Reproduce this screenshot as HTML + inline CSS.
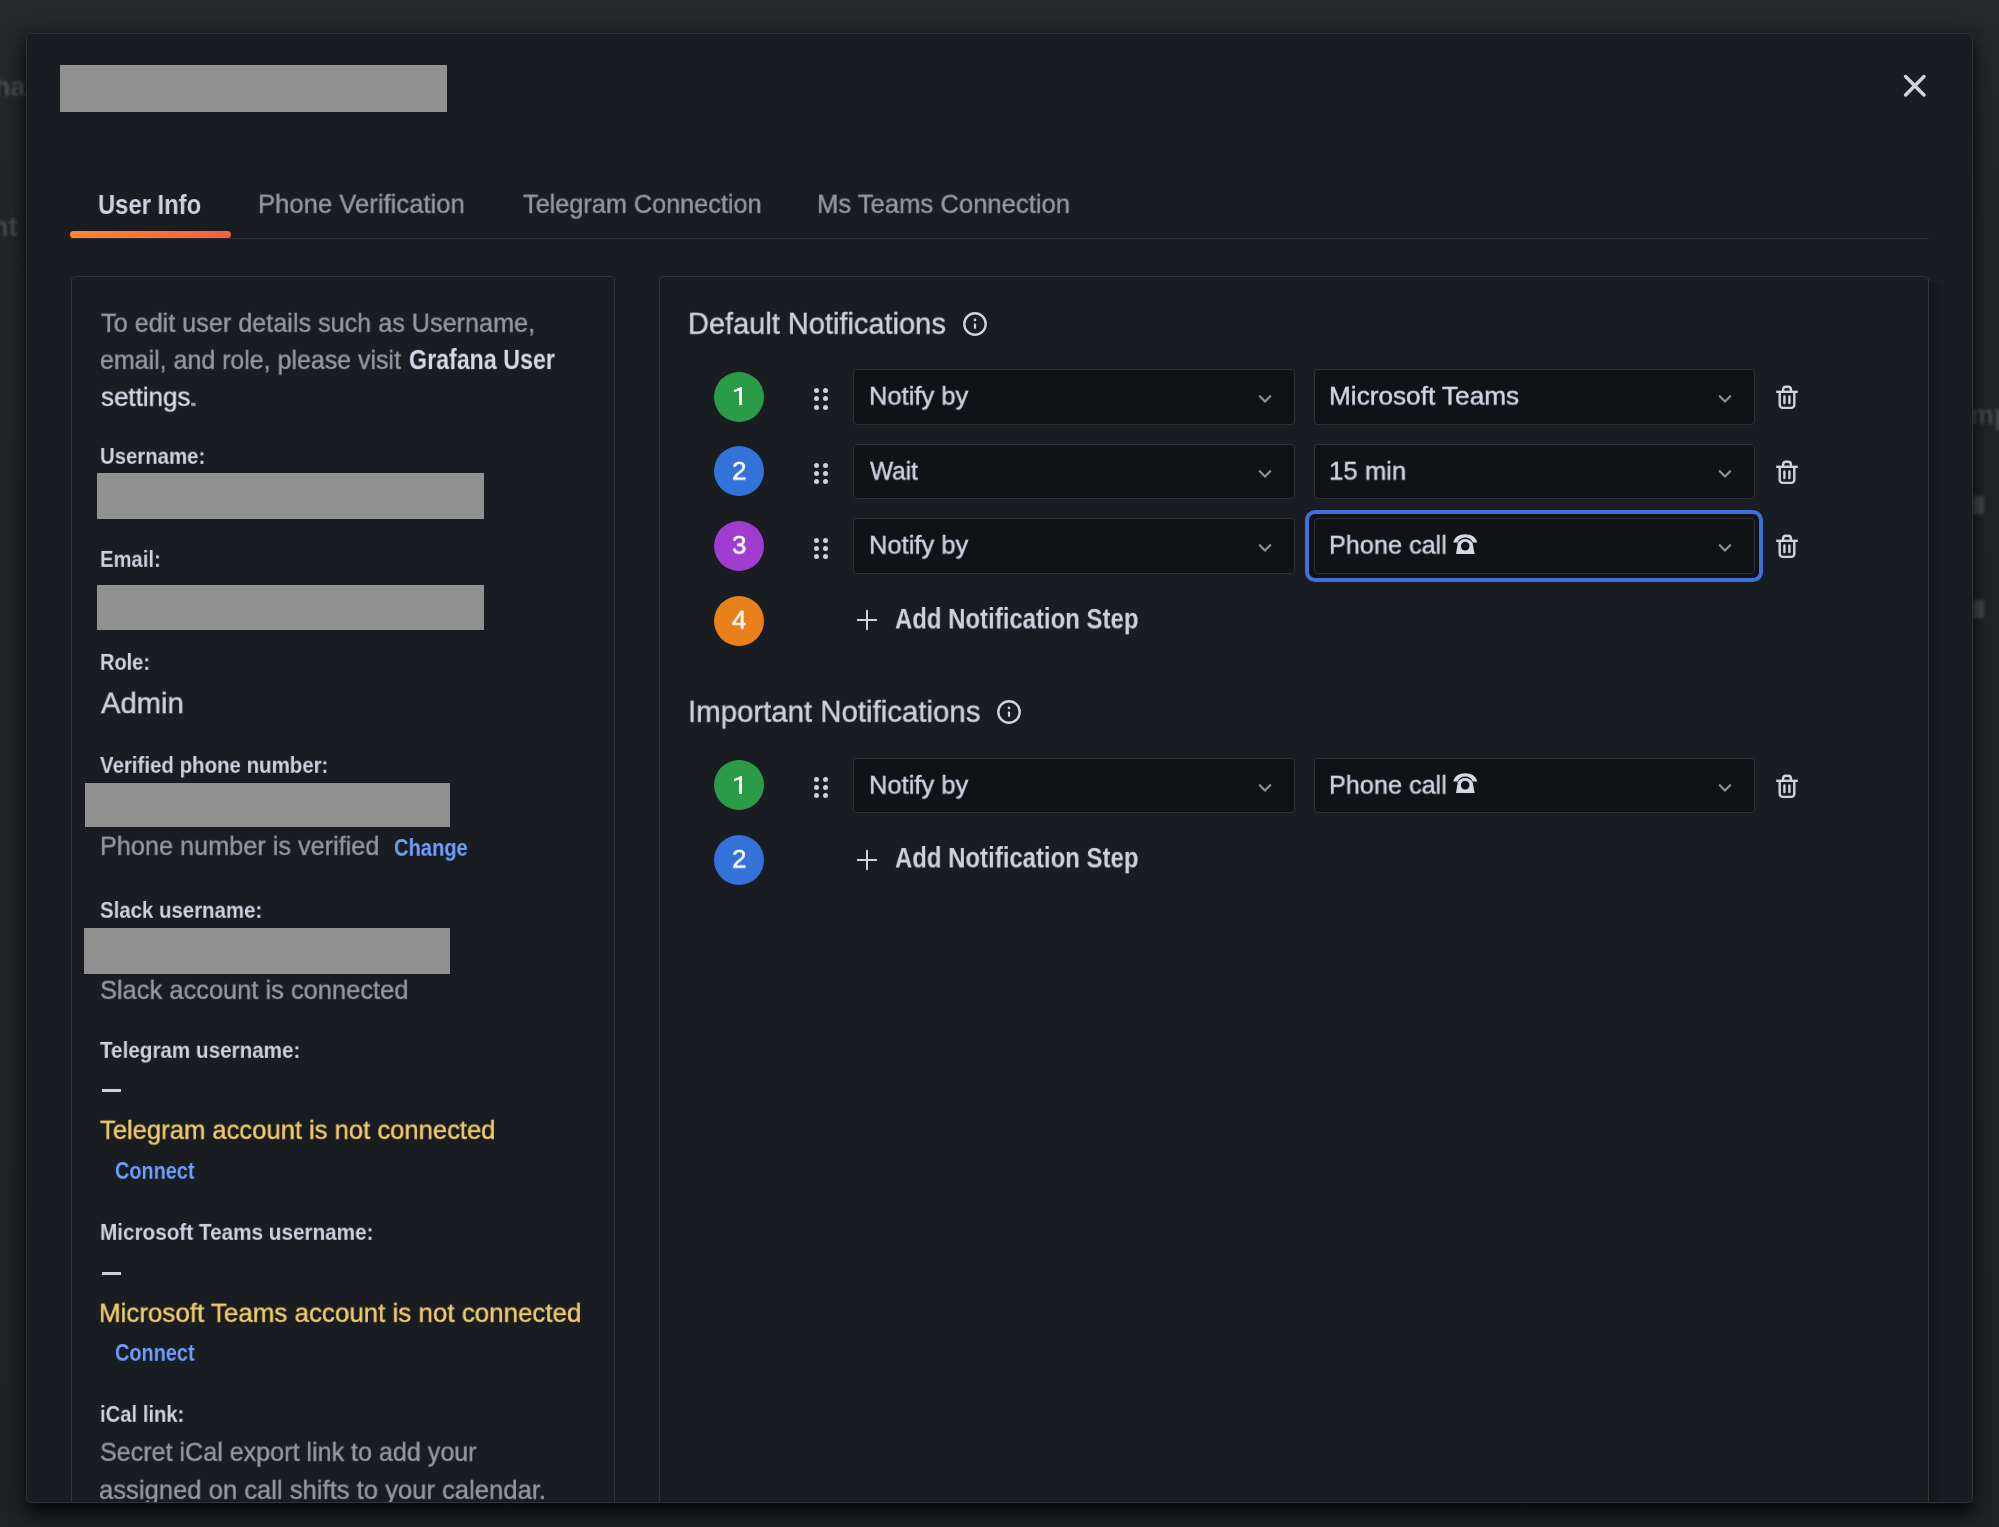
<!DOCTYPE html>
<html><head><meta charset="utf-8"><style>
html,body{margin:0;padding:0;}
body{width:1999px;height:1527px;overflow:hidden;position:relative;background:#222327;font-family:"Liberation Sans",sans-serif;}
.t{position:absolute;white-space:nowrap;transform-origin:0 0;will-change:transform;}
.r{-webkit-text-stroke:0.45px currentColor;}
</style></head><body>
<div style="position:absolute;left:0;top:0;width:1999px;height:1527px;background:linear-gradient(180deg,#26282b 0%,#222428 12%,#1f2125 100%)"></div>
<div style="position:absolute;left:0;top:0;width:1999px;height:1527px;overflow:hidden">
<div style="position:absolute;left:-6px;top:72px;font-family:'Liberation Sans';font-weight:700;font-size:27px;line-height:30px;color:#4a4c50;filter:blur(1px)">ha</div>
<div style="position:absolute;left:-8px;top:212px;font-family:'Liberation Sans';font-weight:700;font-size:27px;line-height:30px;color:#45474b;filter:blur(1px)">nt</div>
<div style="position:absolute;left:1970px;top:400px;font-family:'Liberation Sans';font-weight:700;font-size:27px;line-height:30px;color:#45474b;filter:blur(1px)">mp</div>
<div style="position:absolute;left:1972px;top:496px;width:12px;height:18px;background:#45474b;filter:blur(1.5px);border-radius:2px"></div>
<div style="position:absolute;left:1972px;top:600px;width:12px;height:18px;background:#45474b;filter:blur(1.5px);border-radius:2px"></div>
<div style="position:absolute;left:26px;top:33px;width:1947px;height:1470px;background:#191c20;border-radius:5px;box-shadow:0 0 18px rgba(0,0,0,0.4),0 12px 16px rgba(0,0,0,0.6)"></div>
<div style="position:absolute;left:0;top:0;width:1999px;height:1502px;overflow:hidden">
<div style="position:absolute;left:60px;top:65.3px;width:387.2px;height:46.3px;background:#919191"></div>
<svg style="position:absolute;left:1900px;top:71px" width="30" height="30" viewBox="0 0 30 30"><path d="M5.6 5.6L24 24M24 5.6L5.6 24" stroke="#d3d3e0" stroke-width="3.5" stroke-linecap="round"/></svg>
<div class="t" style="left:97.64px;top:191px;font-size:27.5px;line-height:27.5px;color:#d0d0de;font-weight:700;transform:scale(0.8650,1.0005)">User Info</div>
<div class="t r" style="left:258.28px;top:190px;font-size:28.25px;line-height:28.25px;color:#9797a4;font-weight:400;transform:scale(0.9081,0.9511)">Phone Verification</div>
<div class="t r" style="left:522.87px;top:190px;font-size:28.25px;line-height:28.25px;color:#9797a4;font-weight:400;transform:scale(0.8936,0.9511)">Telegram Connection</div>
<div class="t r" style="left:817.28px;top:190px;font-size:28.25px;line-height:28.25px;color:#9797a4;font-weight:400;transform:scale(0.9070,0.9511)">Ms Teams Connection</div>
<div style="position:absolute;left:70px;top:238px;width:1859px;height:1px;background:#2b2d32"></div>
<div style="position:absolute;left:70px;top:230.5px;width:160.5px;height:7.0px;background:linear-gradient(90deg,#ff8833,#f55f3e);border-radius:4px"></div>
<div style="position:absolute;left:71px;top:276px;width:544px;height:1254px;border:1px solid #32343a;border-radius:4px;box-sizing:border-box;"></div>
<div style="position:absolute;left:659px;top:276px;width:1270px;height:1254px;border:1px solid #32343a;border-radius:4px;box-sizing:border-box;"></div>
<div style="position:absolute;left:1929px;top:282px;width:14px;height:1248px;background:linear-gradient(90deg,rgba(0,0,0,0.3),rgba(0,0,0,0))"></div>
<div class="t r" style="left:100.87px;top:309px;font-size:28.25px;line-height:28.25px;color:#9797a4;font-weight:400;transform:scale(0.8916,0.9511)">To edit user details such as Username,</div>
<div class="t r" style="left:100.00px;top:346px;font-size:28.25px;line-height:28.25px;color:#9797a4;font-weight:400;transform:scale(0.8833,0.9511)">email, and role, please visit</div>
<div class="t" style="left:409.26px;top:345px;font-size:29.5px;line-height:29.5px;color:#d8d8e6;font-weight:700;transform:scale(0.7872,0.9634)">Grafana User</div>
<div class="t r" style="left:100.51px;top:383px;font-size:28.25px;line-height:28.25px;color:#d8d8e6;font-weight:400;transform:scale(0.9184,0.9511)">settings</div>
<div class="t r" style="left:188.30px;top:383px;font-size:28.25px;line-height:28.25px;color:#9797a4;font-weight:400;transform:scale(1.3714,0.9511)">.</div>
<div class="t" style="left:100.47px;top:446px;font-size:23.5px;line-height:23.5px;color:#d0d0de;font-weight:700;transform:scale(0.8662,0.9381)">Username:</div>
<div style="position:absolute;left:97px;top:473px;width:387px;height:46px;background:#919191"></div>
<div class="t" style="left:99.64px;top:549px;font-size:23.5px;line-height:23.5px;color:#d0d0de;font-weight:700;transform:scale(0.8606,0.9381)">Email:</div>
<div style="position:absolute;left:97px;top:585px;width:387px;height:45px;background:#919191"></div>
<div class="t" style="left:100.06px;top:652px;font-size:23.5px;line-height:23.5px;color:#d0d0de;font-weight:700;transform:scale(0.8507,0.9381)">Role:</div>
<div class="t r" style="left:100.95px;top:689px;font-size:31.5px;line-height:31.5px;color:#d0d0de;font-weight:400;transform:scale(0.9270,0.9265)">Admin</div>
<div class="t" style="left:100.35px;top:755px;font-size:23.5px;line-height:23.5px;color:#d0d0de;font-weight:700;transform:scale(0.8702,0.9381)">Verified phone number:</div>
<div style="position:absolute;left:85px;top:783px;width:365px;height:44px;background:#919191"></div>
<div class="t r" style="left:100.32px;top:832px;font-size:28.25px;line-height:28.25px;color:#9797a4;font-weight:400;transform:scale(0.8940,0.9511)">Phone number is verified</div>
<div class="t" style="left:393.84px;top:837px;font-size:23.5px;line-height:23.5px;color:#6e9fff;font-weight:700;transform:scale(0.8558,0.9882)">Change</div>
<div class="t" style="left:99.81px;top:900px;font-size:23.5px;line-height:23.5px;color:#d0d0de;font-weight:700;transform:scale(0.8681,0.9381)">Slack username:</div>
<div style="position:absolute;left:84px;top:928px;width:366px;height:45.5px;background:#919191"></div>
<div class="t r" style="left:100.05px;top:976px;font-size:28.25px;line-height:28.25px;color:#9797a4;font-weight:400;transform:scale(0.9007,0.9511)">Slack account is connected</div>
<div class="t" style="left:99.98px;top:1040px;font-size:23.5px;line-height:23.5px;color:#d0d0de;font-weight:700;transform:scale(0.8782,0.9381)">Telegram username:</div>
<div style="position:absolute;left:101.6px;top:1089px;width:19.5px;height:3.2000000000000455px;background:#d0d0de"></div>
<div class="t r" style="left:100.03px;top:1116px;font-size:28.25px;line-height:28.25px;color:#f2cc6b;font-weight:400;transform:scale(0.9058,0.9511)">Telegram account is not connected</div>
<div class="t" style="left:114.86px;top:1160px;font-size:23.5px;line-height:23.5px;color:#6e9fff;font-weight:700;transform:scale(0.8456,0.9882)">Connect</div>
<div class="t" style="left:99.60px;top:1222px;font-size:23.5px;line-height:23.5px;color:#d0d0de;font-weight:700;transform:scale(0.8811,0.9381)">Microsoft Teams username:</div>
<div style="position:absolute;left:101.8px;top:1271.6px;width:19.10000000000001px;height:3.0px;background:#d0d0de"></div>
<div class="t r" style="left:99.30px;top:1299px;font-size:28.25px;line-height:28.25px;color:#f2cc6b;font-weight:400;transform:scale(0.9180,0.9511)">Microsoft Teams account is not connected</div>
<div class="t" style="left:114.85px;top:1342px;font-size:23.5px;line-height:23.5px;color:#6e9fff;font-weight:700;transform:scale(0.8464,0.9882)">Connect</div>
<div class="t" style="left:99.84px;top:1404px;font-size:23.5px;line-height:23.5px;color:#d0d0de;font-weight:700;transform:scale(0.8610,0.9381)">iCal link:</div>
<div class="t r" style="left:100.32px;top:1438px;font-size:28.25px;line-height:28.25px;color:#9797a4;font-weight:400;transform:scale(0.8882,0.9511)">Secret iCal export link to add your</div>
<div class="t r" style="left:99.37px;top:1476px;font-size:28.25px;line-height:28.25px;color:#9797a4;font-weight:400;transform:scale(0.9065,0.9511)">assigned on call shifts to your calendar.</div>
<div class="t r" style="left:688.25px;top:309px;font-size:31.5px;line-height:31.5px;color:#d0d0de;font-weight:400;transform:scale(0.9203,0.9535)">Default Notifications</div>
<svg style="position:absolute;left:960.6px;top:309.9px" width="28" height="28" viewBox="0 0 28 28"><circle cx="14" cy="14" r="10.7" fill="none" stroke="#d0d0de" stroke-width="2.4"/><rect x="12.9" y="13.6" width="2.2" height="5.2" rx="0.6" fill="#d0d0de"/><circle cx="14" cy="9.9" r="1.35" fill="#d0d0de"/></svg>
<div class="t r" style="left:688.21px;top:697px;font-size:31.5px;line-height:31.5px;color:#d0d0de;font-weight:400;transform:scale(0.9332,0.9535)">Important Notifications</div>
<svg style="position:absolute;left:995px;top:697.8px" width="28" height="28" viewBox="0 0 28 28"><circle cx="14" cy="14" r="10.7" fill="none" stroke="#d0d0de" stroke-width="2.4"/><rect x="12.9" y="13.6" width="2.2" height="5.2" rx="0.6" fill="#d0d0de"/><circle cx="14" cy="9.9" r="1.35" fill="#d0d0de"/></svg>
<div style="position:absolute;left:1305.3px;top:510.4px;width:457.70000000000005px;height:71.40000000000009px;border:4px solid #3d71d9;border-radius:10px;box-sizing:border-box;background:#101215"></div>
<div style="position:absolute;left:714.2px;top:371.7px;width:50.0px;height:50.0px;background:#2b9b48;border-radius:50%"></div>
<svg style="position:absolute;left:730px;top:385.00px" width="16" height="22" viewBox="730 385.00 16 22"><path d="M739.2 405.00V390.40L734.1 392.30V390.00L740.9 387.10H741.9V405.00Z" fill="#ffffff"/></svg>
<div style="position:absolute;left:814.10px;top:388.30px;width:5px;height:5px;border-radius:50%;background:#d0d0de"></div><div style="position:absolute;left:814.10px;top:396.40px;width:5px;height:5px;border-radius:50%;background:#d0d0de"></div><div style="position:absolute;left:814.10px;top:404.50px;width:5px;height:5px;border-radius:50%;background:#d0d0de"></div><div style="position:absolute;left:822.50px;top:388.30px;width:5px;height:5px;border-radius:50%;background:#d0d0de"></div><div style="position:absolute;left:822.50px;top:396.40px;width:5px;height:5px;border-radius:50%;background:#d0d0de"></div><div style="position:absolute;left:822.50px;top:404.50px;width:5px;height:5px;border-radius:50%;background:#d0d0de"></div>
<div style="position:absolute;left:853px;top:369.2px;width:442px;height:55.400000000000034px;background:#111216;border:1px solid #2f3136;border-radius:4px;box-sizing:border-box"></div>
<svg style="position:absolute;left:1255.00px;top:386.90px" width="20" height="20" viewBox="0 0 20 20"><path d="M4.8 9.2L10 14.6L15.2 9.2" fill="none" stroke="#8e8e9c" stroke-width="2.2" stroke-linecap="round" stroke-linejoin="round"/></svg>
<div style="position:absolute;left:1313.8px;top:369.2px;width:440.79999999999995px;height:55.400000000000034px;background:#111216;border:1px solid #2f3136;border-radius:4px;box-sizing:border-box"></div>
<svg style="position:absolute;left:1714.60px;top:386.90px" width="20" height="20" viewBox="0 0 20 20"><path d="M4.8 9.2L10 14.6L15.2 9.2" fill="none" stroke="#8e8e9c" stroke-width="2.2" stroke-linecap="round" stroke-linejoin="round"/></svg>
<svg style="position:absolute;left:1774.30px;top:381.90px" width="26" height="30" viewBox="0 0 26 30"><path d="M2.2 9.8H23.8" stroke="#d0d0de" stroke-width="2.4"/><path d="M9.1 9.8V7.5a2.8 2.8 0 0 1 2.8-2.8h2.2a2.8 2.8 0 0 1 2.8 2.8V9.8" fill="none" stroke="#d0d0de" stroke-width="2.4"/><path d="M5.7 9.8V22.9a3 3 0 0 0 3 3h8.6a3 3 0 0 0 3-3V9.8" fill="none" stroke="#d0d0de" stroke-width="2.4"/><path d="M10.4 14.5V21.1M15.4 14.5V21.1" stroke="#d0d0de" stroke-width="2.4" stroke-linecap="round"/></svg>
<div class="t r" style="left:868.66px;top:383px;font-size:26.0px;line-height:26.0px;color:#d2d2e0;font-weight:400;transform:scale(0.9802,0.9811)">Notify by</div>
<div class="t r" style="left:1329.47px;top:383px;font-size:26.0px;line-height:26.0px;color:#d2d2e0;font-weight:400;transform:scale(1.0071,0.9811)">Microsoft Teams</div>
<div style="position:absolute;left:714.2px;top:446.3px;width:50.0px;height:50.0px;background:#3373d9;border-radius:50%"></div>
<div class="t r" style="left:731.81px;top:458px;font-size:26.0px;line-height:26.0px;color:#ffffff;font-weight:400;transform:scale(1.0000,0.9811)">2</div>
<div style="position:absolute;left:814.10px;top:462.90px;width:5px;height:5px;border-radius:50%;background:#d0d0de"></div><div style="position:absolute;left:814.10px;top:471.00px;width:5px;height:5px;border-radius:50%;background:#d0d0de"></div><div style="position:absolute;left:814.10px;top:479.10px;width:5px;height:5px;border-radius:50%;background:#d0d0de"></div><div style="position:absolute;left:822.50px;top:462.90px;width:5px;height:5px;border-radius:50%;background:#d0d0de"></div><div style="position:absolute;left:822.50px;top:471.00px;width:5px;height:5px;border-radius:50%;background:#d0d0de"></div><div style="position:absolute;left:822.50px;top:479.10px;width:5px;height:5px;border-radius:50%;background:#d0d0de"></div>
<div style="position:absolute;left:853px;top:443.8px;width:442px;height:55.39999999999998px;background:#111216;border:1px solid #2f3136;border-radius:4px;box-sizing:border-box"></div>
<svg style="position:absolute;left:1255.00px;top:461.50px" width="20" height="20" viewBox="0 0 20 20"><path d="M4.8 9.2L10 14.6L15.2 9.2" fill="none" stroke="#8e8e9c" stroke-width="2.2" stroke-linecap="round" stroke-linejoin="round"/></svg>
<div style="position:absolute;left:1313.8px;top:443.8px;width:440.79999999999995px;height:55.39999999999998px;background:#111216;border:1px solid #2f3136;border-radius:4px;box-sizing:border-box"></div>
<svg style="position:absolute;left:1714.60px;top:461.50px" width="20" height="20" viewBox="0 0 20 20"><path d="M4.8 9.2L10 14.6L15.2 9.2" fill="none" stroke="#8e8e9c" stroke-width="2.2" stroke-linecap="round" stroke-linejoin="round"/></svg>
<svg style="position:absolute;left:1774.30px;top:456.50px" width="26" height="30" viewBox="0 0 26 30"><path d="M2.2 9.8H23.8" stroke="#d0d0de" stroke-width="2.4"/><path d="M9.1 9.8V7.5a2.8 2.8 0 0 1 2.8-2.8h2.2a2.8 2.8 0 0 1 2.8 2.8V9.8" fill="none" stroke="#d0d0de" stroke-width="2.4"/><path d="M5.7 9.8V22.9a3 3 0 0 0 3 3h8.6a3 3 0 0 0 3-3V9.8" fill="none" stroke="#d0d0de" stroke-width="2.4"/><path d="M10.4 14.5V21.1M15.4 14.5V21.1" stroke="#d0d0de" stroke-width="2.4" stroke-linecap="round"/></svg>
<div class="t r" style="left:870.02px;top:458px;font-size:26.0px;line-height:26.0px;color:#d2d2e0;font-weight:400;transform:scale(0.9403,0.9811)">Wait</div>
<div class="t r" style="left:1329.28px;top:458px;font-size:26.0px;line-height:26.0px;color:#d2d2e0;font-weight:400;transform:scale(0.9896,0.9811)">15 min</div>
<div style="position:absolute;left:714.2px;top:520.9px;width:50.0px;height:50.0px;background:#a03ccf;border-radius:50%"></div>
<div class="t r" style="left:731.81px;top:532px;font-size:26.0px;line-height:26.0px;color:#ffffff;font-weight:400;transform:scale(1.0000,0.9811)">3</div>
<div style="position:absolute;left:814.10px;top:537.50px;width:5px;height:5px;border-radius:50%;background:#d0d0de"></div><div style="position:absolute;left:814.10px;top:545.60px;width:5px;height:5px;border-radius:50%;background:#d0d0de"></div><div style="position:absolute;left:814.10px;top:553.70px;width:5px;height:5px;border-radius:50%;background:#d0d0de"></div><div style="position:absolute;left:822.50px;top:537.50px;width:5px;height:5px;border-radius:50%;background:#d0d0de"></div><div style="position:absolute;left:822.50px;top:545.60px;width:5px;height:5px;border-radius:50%;background:#d0d0de"></div><div style="position:absolute;left:822.50px;top:553.70px;width:5px;height:5px;border-radius:50%;background:#d0d0de"></div>
<div style="position:absolute;left:853px;top:518.4px;width:442px;height:55.39999999999998px;background:#111216;border:1px solid #2f3136;border-radius:4px;box-sizing:border-box"></div>
<svg style="position:absolute;left:1255.00px;top:536.10px" width="20" height="20" viewBox="0 0 20 20"><path d="M4.8 9.2L10 14.6L15.2 9.2" fill="none" stroke="#8e8e9c" stroke-width="2.2" stroke-linecap="round" stroke-linejoin="round"/></svg>
<div style="position:absolute;left:1313.8px;top:518.4px;width:440.79999999999995px;height:55.39999999999998px;background:#111216;border:1px solid #2f3136;border-radius:4px;box-sizing:border-box"></div>
<svg style="position:absolute;left:1714.60px;top:536.10px" width="20" height="20" viewBox="0 0 20 20"><path d="M4.8 9.2L10 14.6L15.2 9.2" fill="none" stroke="#8e8e9c" stroke-width="2.2" stroke-linecap="round" stroke-linejoin="round"/></svg>
<svg style="position:absolute;left:1774.30px;top:531.10px" width="26" height="30" viewBox="0 0 26 30"><path d="M2.2 9.8H23.8" stroke="#d0d0de" stroke-width="2.4"/><path d="M9.1 9.8V7.5a2.8 2.8 0 0 1 2.8-2.8h2.2a2.8 2.8 0 0 1 2.8 2.8V9.8" fill="none" stroke="#d0d0de" stroke-width="2.4"/><path d="M5.7 9.8V22.9a3 3 0 0 0 3 3h8.6a3 3 0 0 0 3-3V9.8" fill="none" stroke="#d0d0de" stroke-width="2.4"/><path d="M10.4 14.5V21.1M15.4 14.5V21.1" stroke="#d0d0de" stroke-width="2.4" stroke-linecap="round"/></svg>
<div class="t r" style="left:868.66px;top:532px;font-size:26.0px;line-height:26.0px;color:#d2d2e0;font-weight:400;transform:scale(0.9802,0.9811)">Notify by</div>
<div class="t r" style="left:1328.70px;top:532px;font-size:26.0px;line-height:26.0px;color:#d2d2e0;font-weight:400;transform:scale(0.9706,0.9811)">Phone call</div>
<svg style="position:absolute;left:1453.4px;top:533.00px" width="25" height="22" viewBox="0 0 25 22"><path d="M0.3 9.4C1.5 4 6 1.2 12.2 1.2C18.4 1.2 23 4 24.3 9.4L19.8 9.4C18.5 6.4 15.5 4.6 12.2 4.6C8.9 4.6 5.9 6.4 4.6 9.4Z" fill="#d8d8e4"/><path d="M4.8 10.2C6.2 7.7 9 6 12.2 6C15.4 6 18.2 7.7 19.6 10.2L21.6 21H3Z" fill="#d8d8e4"/><circle cx="12.2" cy="13.1" r="4.3" fill="#111216"/></svg>
<div style="position:absolute;left:714.2px;top:595.5px;width:50.0px;height:50.0px;background:#e8801c;border-radius:50%"></div>
<div class="t r" style="left:731.81px;top:607px;font-size:26.0px;line-height:26.0px;color:#ffffff;font-weight:400;transform:scale(1.0000,0.9811)">4</div>
<svg style="position:absolute;left:855.90px;top:609.30px" width="22" height="22" viewBox="0 0 22 22"><path d="M11 1.8V20.2M1.8 11H20.2" stroke="#d0d0de" stroke-width="2" stroke-linecap="round"/></svg>
<div class="t" style="left:894.89px;top:604px;font-size:29.5px;line-height:29.5px;color:#d0d0de;font-weight:700;transform:scale(0.8115,0.9791)">Add Notification Step</div>
<div style="position:absolute;left:714.2px;top:760.3px;width:50.0px;height:50.0px;background:#2b9b48;border-radius:50%"></div>
<svg style="position:absolute;left:730px;top:773.60px" width="16" height="22" viewBox="730 773.60 16 22"><path d="M739.2 793.60V779.00L734.1 780.90V778.60L740.9 775.70H741.9V793.60Z" fill="#ffffff"/></svg>
<div style="position:absolute;left:814.10px;top:776.90px;width:5px;height:5px;border-radius:50%;background:#d0d0de"></div><div style="position:absolute;left:814.10px;top:785.00px;width:5px;height:5px;border-radius:50%;background:#d0d0de"></div><div style="position:absolute;left:814.10px;top:793.10px;width:5px;height:5px;border-radius:50%;background:#d0d0de"></div><div style="position:absolute;left:822.50px;top:776.90px;width:5px;height:5px;border-radius:50%;background:#d0d0de"></div><div style="position:absolute;left:822.50px;top:785.00px;width:5px;height:5px;border-radius:50%;background:#d0d0de"></div><div style="position:absolute;left:822.50px;top:793.10px;width:5px;height:5px;border-radius:50%;background:#d0d0de"></div>
<div style="position:absolute;left:853px;top:757.8px;width:442px;height:55.40000000000009px;background:#111216;border:1px solid #2f3136;border-radius:4px;box-sizing:border-box"></div>
<svg style="position:absolute;left:1255.00px;top:775.50px" width="20" height="20" viewBox="0 0 20 20"><path d="M4.8 9.2L10 14.6L15.2 9.2" fill="none" stroke="#8e8e9c" stroke-width="2.2" stroke-linecap="round" stroke-linejoin="round"/></svg>
<div style="position:absolute;left:1313.8px;top:757.8px;width:440.79999999999995px;height:55.40000000000009px;background:#111216;border:1px solid #2f3136;border-radius:4px;box-sizing:border-box"></div>
<svg style="position:absolute;left:1714.60px;top:775.50px" width="20" height="20" viewBox="0 0 20 20"><path d="M4.8 9.2L10 14.6L15.2 9.2" fill="none" stroke="#8e8e9c" stroke-width="2.2" stroke-linecap="round" stroke-linejoin="round"/></svg>
<svg style="position:absolute;left:1774.30px;top:770.50px" width="26" height="30" viewBox="0 0 26 30"><path d="M2.2 9.8H23.8" stroke="#d0d0de" stroke-width="2.4"/><path d="M9.1 9.8V7.5a2.8 2.8 0 0 1 2.8-2.8h2.2a2.8 2.8 0 0 1 2.8 2.8V9.8" fill="none" stroke="#d0d0de" stroke-width="2.4"/><path d="M5.7 9.8V22.9a3 3 0 0 0 3 3h8.6a3 3 0 0 0 3-3V9.8" fill="none" stroke="#d0d0de" stroke-width="2.4"/><path d="M10.4 14.5V21.1M15.4 14.5V21.1" stroke="#d0d0de" stroke-width="2.4" stroke-linecap="round"/></svg>
<div class="t r" style="left:868.66px;top:772px;font-size:26.0px;line-height:26.0px;color:#d2d2e0;font-weight:400;transform:scale(0.9802,0.9811)">Notify by</div>
<div class="t r" style="left:1328.70px;top:772px;font-size:26.0px;line-height:26.0px;color:#d2d2e0;font-weight:400;transform:scale(0.9706,0.9811)">Phone call</div>
<svg style="position:absolute;left:1453.4px;top:772.40px" width="25" height="22" viewBox="0 0 25 22"><path d="M0.3 9.4C1.5 4 6 1.2 12.2 1.2C18.4 1.2 23 4 24.3 9.4L19.8 9.4C18.5 6.4 15.5 4.6 12.2 4.6C8.9 4.6 5.9 6.4 4.6 9.4Z" fill="#d8d8e4"/><path d="M4.8 10.2C6.2 7.7 9 6 12.2 6C15.4 6 18.2 7.7 19.6 10.2L21.6 21H3Z" fill="#d8d8e4"/><circle cx="12.2" cy="13.1" r="4.3" fill="#111216"/></svg>
<div style="position:absolute;left:714.2px;top:834.9px;width:50.0px;height:50.0px;background:#3373d9;border-radius:50%"></div>
<div class="t r" style="left:731.81px;top:846px;font-size:26.0px;line-height:26.0px;color:#ffffff;font-weight:400;transform:scale(1.0000,0.9811)">2</div>
<svg style="position:absolute;left:855.90px;top:848.70px" width="22" height="22" viewBox="0 0 22 22"><path d="M11 1.8V20.2M1.8 11H20.2" stroke="#d0d0de" stroke-width="2" stroke-linecap="round"/></svg>
<div class="t" style="left:894.89px;top:843px;font-size:29.5px;line-height:29.5px;color:#d0d0de;font-weight:700;transform:scale(0.8115,0.9791)">Add Notification Step</div>
</div>
<div style="position:absolute;left:26px;top:33px;width:1947px;height:1470px;border:1px solid #303236;border-radius:5px;box-sizing:border-box;"></div>
</div>
</body></html>
